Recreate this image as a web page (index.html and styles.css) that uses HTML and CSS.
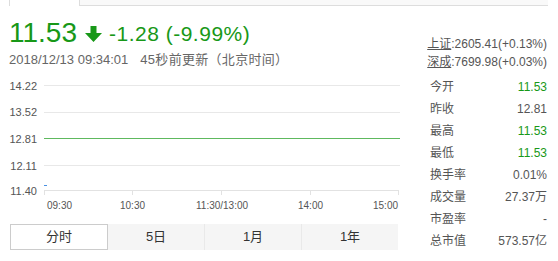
FILE: index.html
```html
<!DOCTYPE html>
<html>
	<head>
		<meta charset="utf-8" />
		<title>11.53 -1.28 (-9.99%)</title>
		<link rel="stylesheet" href="styles.css">
	</head>
	<body>
		<div class="topbar">
			<div class="topbar-tick"></div>
			<div class="topbar-box"></div>
		</div>
		<div class="main">
			<div class="left">
				<div class="quote">
					<div class="price-row">
						<span class="price">11.53</span>
						<svg class="arrow" width="17" height="16" viewBox="0 0 17 16"><polygon points="5.5,0 11.5,0 11.5,7 17,7 8.5,16 0,7 5.5,7" /></svg>
						<span class="change">-1.28 (-9.99%)</span>
					</div>
					<div class="stamp">
						<span>2018/12/13 09:34:01</span><span class="stamp-ago">45秒前更新（北京时间）</span>
					</div>
				</div>
				<svg class="chart" width="400" height="140" viewBox="0 0 400 140">
					<!-- price grid -->
					<line class="grid" x1="44" y1="9.5" x2="400" y2="9.5" />
					<line class="grid" x1="44" y1="36.5" x2="400" y2="36.5" />
					<line class="base" x1="44" y1="62.5" x2="400" y2="62.5" />
					<line class="grid" x1="44" y1="89.5" x2="400" y2="89.5" />
					<line class="axis" x1="44" y1="114.5" x2="399" y2="114.5" />
					<line class="axis" x1="44.5" y1="114" x2="44.5" y2="119" />
					<line class="axis" x1="132.5" y1="114" x2="132.5" y2="119" />
					<line class="axis" x1="221.5" y1="114" x2="221.5" y2="119" />
					<line class="axis" x1="310.5" y1="114" x2="310.5" y2="119" />
					<line class="axis" x1="398.5" y1="114" x2="398.5" y2="119" />
					<rect class="trace" x="44" y="109" width="3" height="1" />

					<text class="ylab" x="37" y="14">14.22</text>
					<text class="ylab" x="37" y="40">13.52</text>
					<text class="ylab" x="37" y="67">12.81</text>
					<text class="ylab" x="37" y="94">12.11</text>
					<text class="ylab" x="37" y="119">11.40</text>

					<text class="xlab" x="47" y="133">09:30</text>
					<text class="xlab" x="120" y="133">10:30</text>
					<text class="xlab" x="196" y="133">11:30/13:00</text>
					<text class="xlab" x="298" y="133">14:00</text>
					<text class="xlab" x="373" y="133">15:00</text>
				</svg>
				<div class="tabs">
					<div class="tab tab-on">分时</div>
					<div class="tab">5日</div>
					<div class="tab">1月</div>
					<div class="tab">1年</div>
				</div>
			</div>
			<div class="right">
				<div class="index"><u>上证</u>:2605.41(+0.13%)</div>
				<div class="index"><u>深成</u>:7699.98(+0.03%)</div>
				<div class="stats">
					<div class="stat"><span>今开</span><span class="down">11.53</span></div>
					<div class="stat"><span>昨收</span><span>12.81</span></div>
					<div class="stat"><span>最高</span><span class="down">11.53</span></div>
					<div class="stat"><span>最低</span><span class="down">11.53</span></div>
					<div class="stat"><span>换手率</span><span>0.01%</span></div>
					<div class="stat"><span>成交量</span><span>27.37万</span></div>
					<div class="stat"><span>市盈率</span><span>-</span></div>
					<div class="stat"><span>总市值</span><span>573.57亿</span></div>
				</div>
			</div>
		</div>
	</body>
</html>
```

FILE: styles.css
```css
html,body
{
	margin: 0;
	padding: 0;
}

body
{
	background-color: #FFF;
	color: #555;
	font-family: "Liberation Sans","Noto Sans CJK SC",sans-serif;
	font-size: 12px;
	width: 558px;
	height: 261px;
	overflow: hidden;
}

.topbar
{
	display: flex;
	height: 6px;
}

.topbar-tick
{
	margin-left: 9px;
	width: 1px;
	background-color: #DDD;
}

.topbar-box
{
	margin-left: 69px;
	width: 468px;
	background-color: #F9F9F9;
	border-left: 1px solid #DDD;
	border-bottom: 1px solid #DDD;
}

.main
{
	display: flex;
}

.left
{
	width: 400px;
}

.quote
{
	padding-left: 9px;
}

.price-row
{
	display: flex;
	align-items: flex-end;
	height: 32px;
	margin-top: 11px;
	color: #189818;
}

.price
{
	font-size: 28px;
	line-height: 32px;
}

.arrow
{
	fill: #189818;
	margin-left: 8px;
	margin-bottom: 7px;
}

.change
{
	font-size: 21px;
	line-height: 24px;
	letter-spacing: 0.5px;
	margin-left: 7px;
	margin-bottom: 3px;
}

.stamp
{
	color: #666;
	font-size: 13px;
	line-height: 18px;
	margin-top: 2px;
}

.stamp-ago
{
	margin-left: 12px;
	letter-spacing: 0.3px;
}

.chart
{
	display: block;
	margin-top: 7px;
}

.grid
{
	stroke: #E8E8E8;
	stroke-width: 1;
}

.base
{
	stroke: #5EB95E;
	stroke-width: 1;
}

.axis
{
	stroke: #E2E2E2;
	stroke-width: 1;
}

.trace
{
	fill: #4A90E2;
}

.ylab
{
	fill: #555;
	font-size: 11px;
	text-anchor: end;
}

.xlab
{
	fill: #555;
	font-size: 10px;
}

.tabs
{
	display: flex;
	margin-top: 8px;
	margin-left: 10px;
	width: 388px;
	height: 26px;
	background-color: #F5F5F5;
}

.tab
{
	flex: 1;
	box-sizing: border-box;
	border-left: 1px solid #E9E9E9;
	color: #333;
	font-size: 13px;
	line-height: 26px;
	text-align: center;
}

.tab-on
{
	background-color: #FFF;
	border: 1px solid #CCC;
	line-height: 24px;
}

.tab-on + .tab
{
	border-left: none;
}

.right
{
	margin-left: 27px;
	width: 120px;
	padding-top: 29px;
}

.index
{
	line-height: 18px;
	text-align: right;
	white-space: nowrap;
}

.index u
{
	text-decoration: underline;
}

.stats
{
	margin-top: 5px;
}

.stat
{
	display: flex;
	justify-content: space-between;
	height: 22px;
	line-height: 22px;
	padding-left: 3px;
}

.down
{
	color: #189818;
}
```
